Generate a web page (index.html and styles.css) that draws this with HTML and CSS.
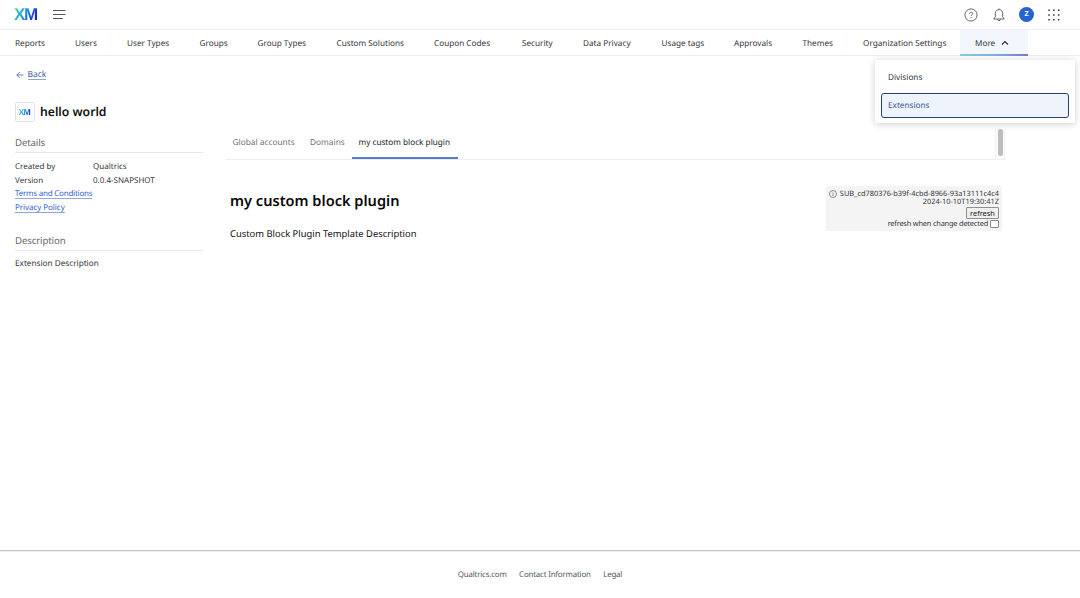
FILE: index.html
```html
<!DOCTYPE html>
<html lang="en">
<head>
<meta charset="utf-8">
<title>Extensions</title>
<link rel="stylesheet" href="styles.css">
</head>
<body>
<header class="topbar">
  <span class="logo">XM</span>
  <svg class="menu-icon" width="13" height="11" viewBox="0 0 13 11" fill="none" stroke="#54565b" stroke-width="1.15"><path d="M0 1.500h12.500M0 5.500h12.500M0 9.500h9.700"/></svg>
  <div class="actions">
    <svg width="14" height="14" viewBox="0 0 14 14" fill="none" stroke="#55575b" stroke-width=".9"><circle cx="7" cy="7" r="6.1"/><path d="M5.500 5.700c0-2 3.100-2 3.100-.1 0 1.200-1.500 1.200-1.500 2.300M7.100 9.100v1"/></svg>
    <svg width="12" height="14" viewBox="0 0 12 14" fill="none" stroke="#55575b" stroke-width=".9"><path d="M.7 11h10.600L9.700 8.800V5.300C9.700 3 8.200 1.600 6 1.600S2.300 3 2.300 5.300v3.500L.7 11ZM6 .5v1.100M4.500 11.300c.2 1.900 2.800 1.900 3 0"/></svg>
    <span class="avatar">Z</span>
    <svg width="12" height="12" viewBox="0 0 12 12" fill="#303236"><path d="M.3.5h1.500V2H.3zM5.100.5h1.500V2H5.100zM9.900.5h1.500V2H9.900zM.3 5.200h1.500v1.500H.3zM5.100 5.200h1.500v1.500H5.100zM9.900 5.200h1.500v1.500H9.900zM.3 9.900h1.500v1.500H.3zM5.100 9.900h1.500v1.500H5.100zM9.900 9.900h1.500v1.500H9.900z"/></svg>
  </div>
</header>
<nav class="nav">
  <a>Reports</a><a>Users</a><a>User Types</a><a>Groups</a><a>Group Types</a><a>Custom Solutions</a><a>Coupon Codes</a><a>Security</a><a>Data Privacy</a><a>Usage tags</a><a>Approvals</a><a>Themes</a><a>Organization Settings</a>
  <a class="more"><span>More</span><svg width="8" height="6" viewBox="0 0 8 6" fill="none" stroke="#2b2d31" stroke-width="1.100"><path d="M1 4.500 4 1.500l3 3"/></svg></a>
</nav>
<div class="dropdown">
  <a>Divisions</a>
  <a class="selected">Extensions</a>
</div>
<main class="page">
  <aside class="side">
    <div class="back"><svg width="8" height="8" viewBox="0 0 8 8" fill="none" stroke="#4262a8" stroke-width=".8"><path d="M7.500 4H.8M3.800 1 .8 4l3 3"/></svg><a>Back</a></div>
    <div class="title"><span class="tile"><span class="logo small">XM</span></span><h1>hello world</h1></div>
    <h2>Details</h2>
    <dl class="facts"><dt>Created by</dt><dd>Qualtrics</dd><dt>Version</dt><dd>0.0.4-SNAPSHOT</dd></dl>
    <div class="links"><a class="terms">Terms and Conditions</a><a>Privacy Policy</a></div>
    <h2 class="second">Description</h2>
    <p class="about">Extension Description</p>
  </aside>
  <section class="content">
    <div class="tabs"><a>Global accounts</a><a>Domains</a><a class="active">my custom block plugin</a><span class="scroll"><i></i></span></div>
    <div class="plugin">
      <div class="intro"><h3>my custom block plugin</h3><p>Custom Block Plugin Template Description</p></div>
      <div class="status">
        <div class="sub"><svg width="8" height="8" viewBox="0 0 8 8" fill="none" stroke="#4a4a4a" stroke-width=".6"><circle cx="4" cy="4" r="3.500"/><path d="M4 3.300v2.700M4 1.900v.8"/></svg><span>SUB_cd780376-b39f-4cbd-8966-93a13111c4c4</span></div>
        <div class="time"><span>2024-10-10T19:30:41Z</span></div>
        <button>refresh</button>
        <div class="check"><span>refresh when change detected</span><i></i></div>
      </div>
    </div>
  </section>
</main>
<footer class="footer"><a>Qualtrics.com</a><a>Contact Information</a><a>Legal</a></footer>
</body>
</html>
```
FILE: styles.css
```css
* { box-sizing: border-box; }
body { margin: 0; height: 598px; display: flex; flex-direction: column; overflow: hidden; background: #fff; color: #34363a; font: 8.2px/14px "Noto Sans", sans-serif; text-rendering: geometricPrecision; position: relative; }
h1, h2, h3, p, dl, dd { margin: 0; }
svg { display: block; flex: none; }
.topbar { height: 30px; flex: none; border-bottom: 1px solid #f0f0f0; display: flex; align-items: center; padding: 0 20px 0 14px; }
.logo { width: 25px; font: 700 17px/18px "Liberation Sans", sans-serif; letter-spacing: -1.400px; color: transparent; background: linear-gradient(115deg, #48d5aa 5%, #259fd8 40%, #1723d5 80%); background-clip: text; -webkit-background-clip: text; }
.menu-icon { margin-left: 13.500px; }
.actions { margin-left: auto; display: flex; align-items: center; }
.actions svg + svg { margin-left: 15px; }
.avatar { width: 15px; height: 15px; border-radius: 50%; margin: 0 14px; background: #2563cf; color: #fff; text-align: center; font-weight: 700; font-size: 7px; line-height: 16px; }
.nav { height: 26px; flex: none; display: grid; grid-template-columns: 60px 52px 72.5px 58px 79px 97.5px 88px 61px 78.5px 72.5px 68.5px 60.5px 112px 68px; border-bottom: 1px solid #eee; line-height: 28px; white-space: nowrap; }
.nav a { padding-left: 15px; }
.nav .more { display: flex; align-items: center; gap: 6px; height: 26px; background: linear-gradient(90deg, #87cdd9, #82b1e8 50%, #7c79cb) bottom / 100% 2px no-repeat #f2f7fd; }
.more span { padding-top: 1px; }
.dropdown { position: absolute; z-index: 2; left: 875px; top: 60px; width: 200px; height: 63px; padding: 5px 6px; background: #fff; border-radius: 2px; box-shadow: 0 1px 7px rgba(0,0,0,.2); }
.dropdown a { display: block; height: 25px; line-height: 25px; padding-left: 7px; border-radius: 3px; }
.dropdown .selected { margin-top: 3px; height: 24.500px; line-height: 23px; padding-left: 6px; background: #eef3fc; border: 1px solid #26417f; color: #3a57a0; }
.page { flex: 1; display: flex; gap: 23px; padding-left: 15px; }
.side { width: 188px; }
.back { display: flex; align-items: center; gap: 3.500px; height: 10px; margin-top: 14px; padding-left: 1px; color: #3e5ea5; font-size: 8.500px; }
.back a { line-height: 9px; height: 10px; border-bottom: 1px solid #90a4cf; }
.title { display: flex; align-items: center; gap: 5px; margin-top: 22px; height: 20px; }
.tile { width: 20px; height: 20px; border: 1px solid #e1e1e3; border-radius: 2px; display: flex; align-items: center; justify-content: center; }
.logo.small { width: 13px; font-size: 8.700px; line-height: 10px; letter-spacing: -.7px; }
h1 { font-size: 12.200px; font-weight: 600; line-height: 20px; color: #111; white-space: nowrap; }
h2 { font-size: 9.600px; letter-spacing: -.1px; font-weight: 400; line-height: 18px; height: 20px; color: #65676b; border-bottom: 1px solid #e7e7e7; margin-top: 11px; padding-top: 1px; }
.facts { display: grid; grid-template-columns: 78px 1fr; margin-top: 7px; line-height: 14px; font-size: 8px; }
.links { display: flex; flex-direction: column; align-items: flex-start; gap: 4px; margin-top: 1px; color: #3563cd; font-size: 8px; letter-spacing: -.06px; }
.links .terms { letter-spacing: -.23px; }
.links a { line-height: 10px; height: 10px; border-bottom: 1px solid #8faae2; white-space: nowrap; }
h2.second { margin-top: 18px; }
.about { margin-top: 6px; }
.content { width: 779px; }
.tabs { display: flex; height: 31px; margin-top: 73px; border-bottom: 1px solid #eee; color: #707276; line-height: 28px; white-space: nowrap; font-size: 8.300px; }
.tabs a { margin-left: 6.500px; width: 70px; }
.tabs a + a { margin-left: 7.500px; width: 34px; }
.tabs a.active { margin-left: 7.500px; width: 106px; padding-left: 7px; height: 30px; color: #202124; border-bottom: 2px solid #5b7cd6; font-size: 8.200px; }
.scroll { margin-left: auto; width: 10px; height: 30px; border-left: 1px solid #f0f0f0; border-right: 1px solid #f0f0f0; display: flex; justify-content: center; background: #fcfcfc; }
.scroll i { width: 5px; height: 27px; background: #bdbdbd; border-radius: 3px; }
.plugin { display: flex; justify-content: space-between; margin-top: 26px; padding: 0 3px 0 4px; }
h3 { margin-top: 5px; font-size: 14.600px; font-weight: 600; line-height: 20px; color: #080808; white-space: nowrap; }
.intro p { margin-top: 16px; font-size: 9.400px; color: #111; white-space: nowrap; }
.status { width: 176px; height: 45px; padding: 4px 3px 0; background: #f4f4f4; display: flex; flex-direction: column; align-items: flex-end; font-size: 7.400px; line-height: 9px; white-space: nowrap; }
.sub { display: flex; gap: 3px; align-items: center; height: 8px; }
.status button { font: inherit; color: #202020; width: 33px; height: 12px; line-height: 10px; padding: 0; border: 1px solid #8f8f8f; border-radius: 1px; background: #efefef; }
.check { display: flex; align-items: center; gap: 2px; height: 10px; letter-spacing: -.19px; }
.check i { width: 9px; height: 8px; border: 1px solid #888; border-radius: 1px; background: #fff; }
.footer { height: 48px; flex: none; border-top: 1px solid #c6c6c6; box-shadow: inset 0 1px #eee; display: flex; justify-content: center; gap: 12.500px; line-height: 48px; color: #55575a; font-size: 7.900px; letter-spacing: -.19px; }
```
